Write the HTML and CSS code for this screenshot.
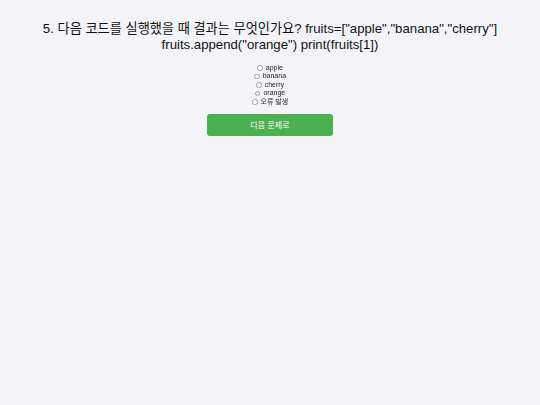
FILE: index.html
```html
<!DOCTYPE html>
<html lang="ko">
<head>
<meta charset="utf-8">
<link rel="stylesheet" href="styles.css">
</head>
<body>
<div class="quiz">
  <h2 class="question">5. 다음 코드를 실행했을 때 결과는 무엇인가요? fruits=["apple","banana","cherry"] fruits.append("orange") print(fruits[1])</h2>
  <div class="options">
    <label class="option"><input type="radio" name="q5" class="radio"> apple</label>
    <label class="option"><input type="radio" name="q5" class="radio"> banana</label>
    <label class="option"><input type="radio" name="q5" class="radio"> cherry</label>
    <label class="option"><input type="radio" name="q5" class="radio"> orange</label>
    <label class="option"><input type="radio" name="q5" class="radio"> 오류 발생</label>
  </div>
  <button class="next">다음 문제로</button>
</div>
</body>
</html>
```
FILE: styles.css
```css
html, body {
  margin: 0;
  padding: 0;
  background: #f4f4f8;
}
body {
  font-family: "Liberation Sans", "Noto Sans CJK KR", sans-serif;
  color: #111;
}
.quiz {
  display: flex;
  flex-direction: column;
  align-items: center;
  padding: 21px 10px 0;
}
.question {
  margin: 0;
  font-size: 13.2px;
  font-weight: normal;
  line-height: 15.5px;
  text-align: center;
  width: 470px;
}
.options {
  display: flex;
  flex-direction: column;
  align-items: center;
  margin-top: 12px;
  will-change: transform;
}
.option {
  display: flex;
  align-items: center;
  font-size: 7px;
  line-height: 8.4px;
  height: 8.4px;
  color: #222;
}
.radio {
  width: 5.5px;
  height: 5.5px;
  margin: 0 3px 0 0;
  appearance: none;
  border: 0.6px solid #999;
  border-radius: 50%;
  background: #fff;
}
.next {
  margin-top: 8px;
  width: 126px;
  height: 22px;
  border: none;
  border-radius: 3px;
  background: #4caf50;
  color: #fff;
  font-family: "Liberation Sans", "Noto Sans CJK KR", sans-serif;
  font-size: 8px;
}
```
